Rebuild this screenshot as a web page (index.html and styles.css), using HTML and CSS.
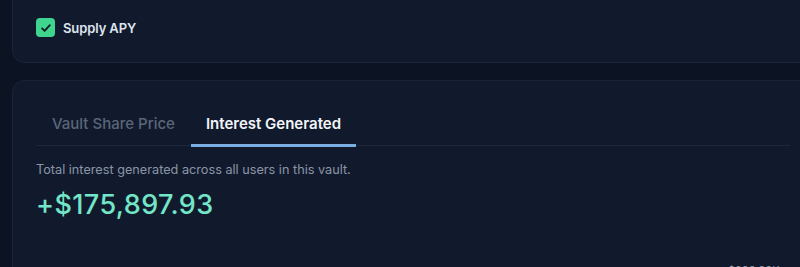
FILE: index.html
```html
<!DOCTYPE html>
<html>
<head>
<meta charset="utf-8">
<link rel="stylesheet" href="styles.css">
</head>
<body>
<div class="page">
  <section class="card card-top">
    <label class="check-row">
      <span class="checkbox">
        <svg viewBox="0 0 20 20" width="14" height="14"><path d="M4.5 10.5l3.5 3.5 7.5-8" fill="none" stroke="#0f1a1c" stroke-width="2.6" stroke-linecap="round" stroke-linejoin="round"/></svg>
      </span>
      <span class="check-label">Supply APY</span>
    </label>
  </section>
  <section class="card card-main">
    <div class="tabs">
      <div class="tab">Vault Share Price</div>
      <div class="tab active">Interest Generated</div>
    </div>
    <p class="desc">Total interest generated across all users in this vault.</p>
    <div class="amount">+$175,897.93</div>
    <div class="axis-label">$200.00K</div>
  </section>
</div>
</body>
</html>
```
FILE: styles.css
```css
html, body {
  margin: 0;
  padding: 0;
  background: #0c1322;
  overflow: hidden;
  width: 800px;
  height: 267px;
}
.page {
  font-family: Inter, "Noto Sans", sans-serif;
  padding-left: 12px;
  display: flex;
  flex-direction: column;
  gap: 17px;
  margin-top: -40px;
  width: 802px;
}
.card {
  background: #111a2c;
  border: 1px solid #1a2437;
  border-radius: 12px;
  box-sizing: border-box;
  width: 802px;
}
.card-top {
  padding: 57px 23px 25px;
}
.check-row {
  display: flex;
  align-items: center;
  gap: 8px;
}
.checkbox {
  width: 19px;
  height: 19px;
  border-radius: 4px;
  background: #3fd58f;
  display: flex;
  align-items: center;
  justify-content: center;
}
.check-label {
  color: #dfe5ee;
  font-size: 13px;
  font-weight: 600;
  letter-spacing: -0.1px;
}
.card-main {
  padding: 24px 23px 0;
  height: 220px;
  position: relative;
}
.tabs {
  display: flex;
  border-bottom: 1px solid #1c2739;
}
.tab {
  padding: 9px 16px 11px;
  font-size: 15px;
  font-weight: 500;
  color: #5a6679;
  border-bottom: 3px solid transparent;
  margin-bottom: -2px;
}
.tabs .tab:first-child {
  padding-left: 16px;
  padding-right: 16px;
}
.tab.active {
  color: #f1f4f8;
  font-weight: 600;
  border-bottom-color: #7aaee0;
  padding-left: 15px;
  padding-right: 15px;
}
.desc {
  margin: 16px 0 0;
  font-size: 12.7px;
  color: #8b95a7;
}
.amount {
  margin-top: 11px;
  font-size: 27px;
  font-weight: 500;
  color: #74e6c8;
  letter-spacing: 0.4px;
}
.axis-label {
  position: absolute;
  left: 715px;
  top: 182px;
  font-size: 11px;
  color: #8a94a6;
}
```
